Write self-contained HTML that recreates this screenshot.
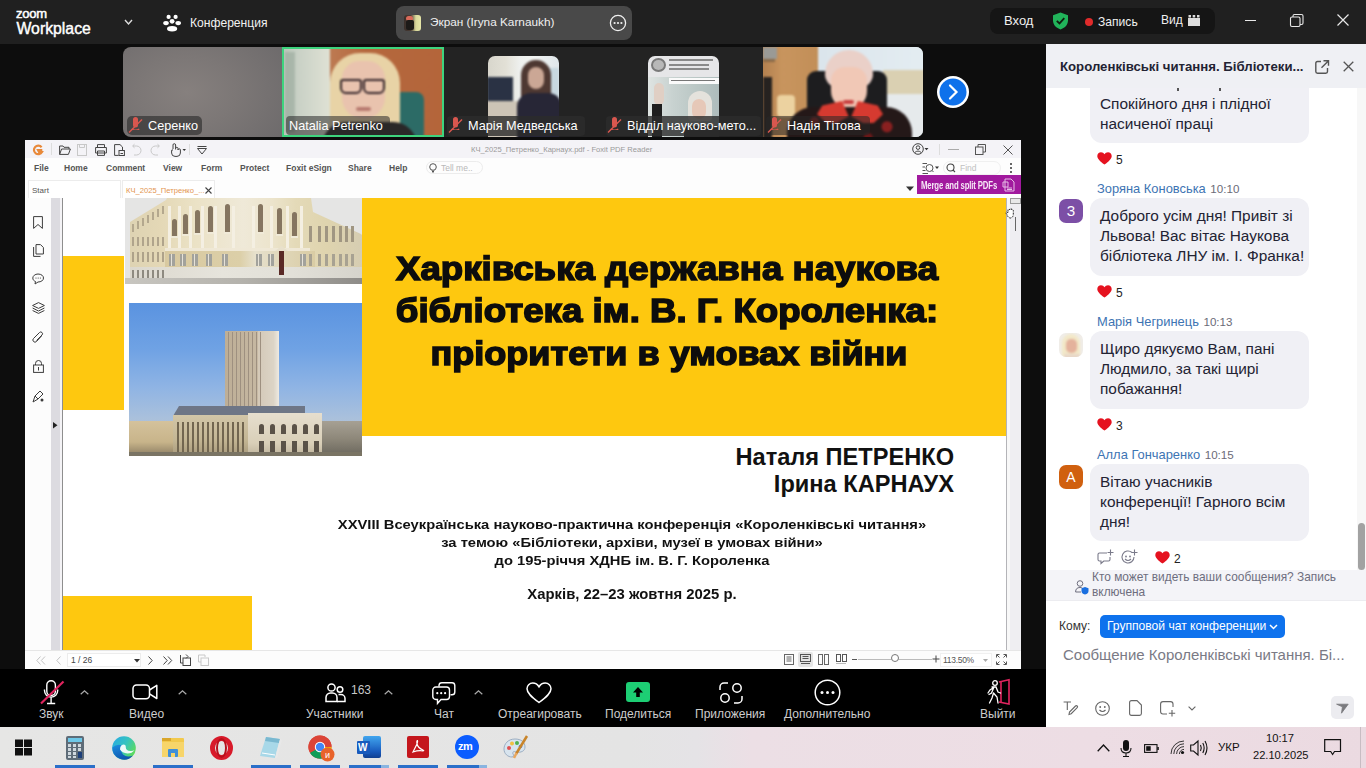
<!DOCTYPE html>
<html><head><meta charset="utf-8">
<style>
*{margin:0;padding:0;box-sizing:border-box}
html,body{width:1366px;height:768px;overflow:hidden;background:#0d0d0d;font-family:"Liberation Sans",sans-serif}
.a{position:absolute}
.t{position:absolute;white-space:nowrap;line-height:1}
svg{position:absolute;overflow:visible}
.ttl{font-size:33px;line-height:1;white-space:nowrap;text-align:center;font-weight:bold;color:#0d0d0d;-webkit-text-stroke:1.5px #0d0d0d;transform:scaleX(1.11);transform-origin:50% 0}
.nm{font-size:23.6px;font-weight:bold;color:#111}
.cf{font-size:13.6px;font-weight:bold;color:#111;text-align:center;line-height:18.1px;transform:scaleX(1.085);transform-origin:50% 0}
.cf2{font-size:14.3px;font-weight:bold;color:#111;text-align:center;transform:scaleX(1.04);transform-origin:50% 0}
.bub{background:#f0f0f5;border-radius:12px}
.msg{font-size:15.4px;color:#232333;padding-top:1px}
.rc{font-size:12px;color:#222;padding-top:1px}
.nmc{font-size:12.9px;color:#3d74b3}
.tm{color:#6b6b78;font-size:11.6px;margin-left:1px}
.av{width:24px;height:24px;border-radius:7px;color:#fff;font-size:14px;text-align:center;line-height:24px}
.nt{font-size:11.9px;color:#6e6e7e}
.tl{font-size:12px;color:#cdcdcd}
.lb{font-size:12.7px;color:#fff}
.mb{font-size:8.5px;font-weight:bold;color:#555}
</style></head><body>

<!-- TOP BAR -->
<div id="topbar" class="a" style="left:0;top:0;width:1366px;height:44px;background:#202020">
  <div class="t" style="left:16px;top:6.5px;font-size:13px;color:#fff;-webkit-text-stroke:0.5px #fff;letter-spacing:-0.2px">zoom</div>
  <div class="t" style="left:16.5px;top:20.5px;font-size:15.8px;color:#fff;-webkit-text-stroke:0.4px #fff">Workplace</div>
  <svg style="left:124px;top:19px" width="9" height="7"><path d="M1 1 L4.5 5 L8 1" stroke="#ddd" stroke-width="1.4" fill="none"/></svg>
  <svg style="left:163px;top:14px" width="18" height="18" viewBox="0 0 18 18">
    <circle cx="5.6" cy="2.9" r="2.1" fill="#fff"/><circle cx="12.6" cy="2.9" r="2.1" fill="#fff"/>
    <ellipse cx="3" cy="9.1" rx="2.8" ry="2.1" fill="#fff"/><ellipse cx="15.2" cy="9.1" rx="2.8" ry="2.1" fill="#fff"/>
    <circle cx="9.1" cy="7.3" r="3" fill="#202020"/><circle cx="9.1" cy="7.3" r="2.4" fill="#fff"/>
    <ellipse cx="9.1" cy="14.6" rx="5.6" ry="3.2" fill="#202020"/><ellipse cx="9.1" cy="14.7" rx="5.1" ry="2.7" fill="#fff"/>
  </svg>
  <div class="t" style="left:190px;top:16.5px;font-size:12.1px;color:#f2f2f2">Конференция</div>
  <div class="a" style="left:396px;top:6px;width:236px;height:34px;background:#494949;border-radius:8px">
    <div class="a" style="left:8px;top:9px;width:17px;height:16px;border-radius:3px;background:linear-gradient(90deg,#3a2f2a 0%,#4a3b33 40%,#d8d89a 70%,#e6e6a8 100%)">
      <div class="a" style="left:2px;top:1px;width:7px;height:5px;border-radius:3px;background:#d86a5a"></div>
      <div class="a" style="left:2px;top:5px;width:8px;height:10px;border-radius:2px;background:#1c1a18"></div>
    </div>
    <div class="t" style="left:34px;top:10.5px;font-size:11.8px;color:#f0f0f0">Экран (Iryna Karnaukh)</div>
    <svg style="left:213px;top:8px" width="18" height="18"><circle cx="9" cy="9" r="7.6" stroke="#f0f0f0" stroke-width="1.3" fill="none"/><circle cx="5.6" cy="9" r="1.1" fill="#f0f0f0"/><circle cx="9" cy="9" r="1.1" fill="#f0f0f0"/><circle cx="12.4" cy="9" r="1.1" fill="#f0f0f0"/></svg>
  </div>
  <div class="a" style="left:990px;top:8px;width:225px;height:26px;background:#151515;border-radius:8px">
    <div class="t" style="left:14px;top:6px;font-size:13px;color:#f0f0f0">Вход</div>
    <svg style="left:62px;top:4px" width="17" height="18" viewBox="0 0 17 18"><path d="M8.5 0.5 L16 3.2 V8.5 C16 13 12.5 16 8.5 17.5 C4.5 16 1 13 1 8.5 V3.2 Z" fill="#21b35a"/><path d="M4.8 8.8 L7.5 11.4 L12.3 6.2" stroke="#0f1f10" stroke-width="1.8" fill="none"/></svg>
    <div class="a" style="left:95px;top:10px;width:8px;height:8px;border-radius:50%;background:#e02b2b"></div>
    <div class="t" style="left:108px;top:7.5px;font-size:12.1px;color:#f0f0f0">Запись</div>
    <div class="t" style="left:171px;top:5.5px;font-size:12px;color:#f0f0f0">Вид</div>
    <svg style="left:198px;top:7px" width="12" height="11"><rect x="0" y="3" width="12" height="8" fill="#ddd"/><rect x="0.5" y="0" width="2.5" height="2.5" fill="#ddd"/><rect x="4.7" y="0" width="2.5" height="2.5" fill="#ddd"/><rect x="9" y="0" width="2.5" height="2.5" fill="#ddd"/></svg>
  </div>
  <div class="a" style="left:1245px;top:20px;width:11px;height:1px;background:#e8e8e8"></div>
  <svg style="left:1290px;top:14px" width="14" height="13"><rect x="0.5" y="3" width="9.5" height="9.5" rx="1.5" stroke="#e8e8e8" stroke-width="1.1" fill="none"/><path d="M3 3 V2 Q3 0.5 4.5 0.5 H11.5 Q13 0.5 13 2 V9 Q13 10.5 11.5 10.5 H10" stroke="#e8e8e8" stroke-width="1.1" fill="none"/></svg>
  <svg style="left:1337px;top:14px" width="12" height="12"><path d="M0.5 0.5 L11.5 11.5 M11.5 0.5 L0.5 11.5" stroke="#e8e8e8" stroke-width="1.2"/></svg>
</div>

<!-- VIDEO STRIP -->
<div id="strip" class="a" style="left:0;top:44px;width:1046px;height:96px;background:#0d0d0d">
</div>
<!-- tile 1 Серенко -->
<div class="a" style="left:123px;top:47px;width:160px;height:90px;border-radius:8px 0 0 8px;overflow:hidden;background:radial-gradient(ellipse 70% 90% at 40% 50%,#86807e 0%,#7c7776 45%,#6e6b6c 100%)">
  <div class="a" style="left:4px;top:69px;width:75px;height:19px;border-radius:5px;background:rgba(40,40,40,0.6)"></div>
  <svg style="left:5px;top:71px" width="15" height="15" viewBox="0 0 15 15"><path d="M5 1.5 A2.5 2.5 0 0 1 10 1.5 V7 A2.5 2.5 0 0 1 5 7 Z M4 10.5 Q7.5 12.5 11 10.5 L11.5 12 H3.5 Z" fill="#d9574f"/><path d="M1 14.5 L14 1.5" stroke="#d9574f" stroke-width="1.5"/></svg>
  <div class="t lb" style="left:25px;top:73px">Серенко</div>
</div>
<!-- tile 2 Natalia -->
<div class="a" style="left:282px;top:47px;width:162px;height:90px;overflow:hidden;background:#b5683e">
  <div class="a" style="left:-5px;top:-5px;width:172px;height:100px;filter:blur(1.3px)">
    <div class="a" style="left:0;top:0;width:53px;height:100px;background:linear-gradient(90deg,#b4c0b4 0%,#c9d1c6 40%,#dfe1d4 100%)"></div>
    <div class="a" style="left:8px;top:10px;width:10px;height:80px;background:#8fa294;opacity:0.5"></div>
    <div class="a" style="left:53px;top:0;width:119px;height:100px;background:linear-gradient(90deg,#bd7a52 0%,#b5683e 30%,#b4653a 100%)"></div>
    <div class="a" style="left:117px;top:50px;width:30px;height:50px;border-radius:8px;background:#2c6b66"></div>
    <div class="a" style="left:53px;top:11px;width:70px;height:95px;border-radius:30px 30px 8px 8px;background:#e8d3a6"></div>
    <div class="a" style="left:65px;top:19px;width:43px;height:58px;border-radius:18px 18px 22px 22px;background:#e9c3ae"></div>
    <div class="a" style="left:63px;top:37px;width:22px;height:15px;border:2px solid #35262a;border-radius:3px 3px 6px 6px"></div>
    <div class="a" style="left:86px;top:37px;width:22px;height:15px;border:2px solid #35262a;border-radius:3px 3px 6px 6px"></div>
    <div class="a" style="left:79px;top:65px;width:15px;height:4px;border-radius:2px;background:#b87a70"></div>
    <div class="a" style="left:45px;top:80px;width:95px;height:30px;border-radius:24px 24px 0 0;background:#2a2828"></div>
  </div>
  <div class="a" style="left:0;top:0;width:162px;height:90px;border:2.5px solid #3ed47e"></div>
  <div class="a" style="left:4px;top:69px;width:104px;height:19px;border-radius:4px;background:rgba(40,40,40,0.55)"></div>
  <div class="t lb" style="left:7px;top:73px">Natalia Petrenko</div>
</div>
<!-- tile 3 Марія -->
<div class="a" style="left:444px;top:47px;width:159px;height:90px;overflow:hidden;background:#232323">
  <div class="a" style="left:44px;top:9px;width:71px;height:81px;border-radius:7px 7px 0 0;overflow:hidden;background:linear-gradient(90deg,#d8d6cc 0%,#e2e0d6 25%,#eef0ee 45%,#f2f4f2 65%,#dfe6ea 100%)">
    <div class="a" style="left:-3px;top:-3px;width:77px;height:87px;filter:blur(1px)">
      <div class="a" style="left:60px;top:15px;width:14px;height:30px;background:#c8d8e0"></div>
      <div class="a" style="left:2px;top:24px;width:26px;height:24px;background:#2a3244"></div>
      <div class="a" style="left:0;top:48px;width:40px;height:40px;background:#cdc4b6"></div>
      <div class="a" style="left:36px;top:7px;width:30px;height:42px;border-radius:15px 15px 6px 6px;background:#4e3832"></div>
      <div class="a" style="left:43px;top:14px;width:16px;height:22px;border-radius:8px;background:#cba795"></div>
      <div class="a" style="left:32px;top:40px;width:45px;height:48px;border-radius:14px 14px 0 0;background:#272636"></div>
    </div>
  </div>
  <div class="a" style="left:3px;top:69px;width:138px;height:20px;border-radius:4px;background:rgba(44,44,44,0.8)"></div>
  <svg style="left:4px;top:71px" width="15" height="15" viewBox="0 0 15 15"><path d="M5 1.5 A2.5 2.5 0 0 1 10 1.5 V7 A2.5 2.5 0 0 1 5 7 Z M4 10.5 Q7.5 12.5 11 10.5 L11.5 12 H3.5 Z" fill="#d9574f"/><path d="M1 14.5 L14 1.5" stroke="#d9574f" stroke-width="1.5"/></svg>
  <div class="t lb" style="left:24px;top:73px">Марія Медведська</div>
</div>
<!-- tile 4 Відділ -->
<div class="a" style="left:603px;top:47px;width:160px;height:90px;overflow:hidden;background:#232323">
  <div class="a" style="left:45px;top:9px;width:71px;height:81px;border-radius:7px 7px 0 0;overflow:hidden;background:#e6e6e8">
    <div class="a" style="left:0;top:0;width:71px;height:81px;filter:blur(0.7px)">
      <div class="a" style="left:3px;top:2px;width:15px;height:14px;border-radius:50%;background:#7a7a7a"></div>
      <div class="a" style="left:5px;top:4px;width:11px;height:10px;border-radius:50%;background:#b8b8b8"></div>
      <div class="a" style="left:21px;top:3px;width:44px;height:2px;background:#8a8a8a"></div>
      <div class="a" style="left:21px;top:8px;width:40px;height:2px;background:#8a8a8a"></div>
      <div class="a" style="left:21px;top:12px;width:40px;height:2px;background:#8a8a8a"></div>
      <div class="a" style="left:0;top:21px;width:71px;height:60px;background:linear-gradient(90deg,#dfe4e2 0%,#c8d2d0 35%,#b9c6c4 70%,#aebcbc 100%)"></div>
      <div class="a" style="left:21px;top:22px;width:50px;height:6px;background:#fafafa"></div>
      <div class="a" style="left:23px;top:24px;width:44px;height:1px;background:#777"></div>
      <div class="a" style="left:40px;top:35px;width:24px;height:30px;border-radius:12px 12px 4px 4px;background:#e4e2dc"></div>
      <div class="a" style="left:44px;top:43px;width:14px;height:20px;border-radius:7px;background:#e6c8b8"></div>
      <div class="a" style="left:6px;top:27px;width:10px;height:22px;border-radius:5px;background:#e0cfc4"></div>
      <div class="a" style="left:4px;top:48px;width:10px;height:34px;background:#1e1e1e"></div>
      <div class="a" style="left:36px;top:70px;width:35px;height:12px;background:#2a2a2a"></div>
    </div>
  </div>
  <div class="a" style="left:3px;top:69px;width:155px;height:20px;border-radius:4px;background:rgba(44,44,44,0.8)"></div>
  <svg style="left:4px;top:71px" width="15" height="15" viewBox="0 0 15 15"><path d="M5 1.5 A2.5 2.5 0 0 1 10 1.5 V7 A2.5 2.5 0 0 1 5 7 Z M4 10.5 Q7.5 12.5 11 10.5 L11.5 12 H3.5 Z" fill="#d9574f"/><path d="M1 14.5 L14 1.5" stroke="#d9574f" stroke-width="1.5"/></svg>
  <div class="t lb" style="left:24px;top:73px">Відділ науково-мето...</div>
</div>
<!-- tile 5 Надія -->
<div class="a" style="left:763px;top:47px;width:160px;height:90px;border-radius:0 7px 7px 0;overflow:hidden;background:#dfe8ee">
  <div class="a" style="left:-4px;top:-4px;width:168px;height:98px;filter:blur(1px)">
    <div class="a" style="left:0;top:0;width:59px;height:98px;background:linear-gradient(90deg,#b07c4c,#c8955e 40%,#c28e58 100%)"></div>
    <div class="a" style="left:4px;top:4px;width:14px;height:12px;background:#9a9a96"></div>
    <div class="a" style="left:4px;top:16px;width:12px;height:3px;background:#8a6a48"></div>
    <div class="a" style="left:4px;top:34px;width:9px;height:64px;background:#262220"></div>
    <div class="a" style="left:18px;top:52px;width:18px;height:22px;border-radius:4px;background:#ecd2a0"></div>
    <div class="a" style="left:59px;top:0;width:109px;height:28px;background:linear-gradient(90deg,#dbe5ec,#e4edf2)"></div>
    <div class="a" style="left:59px;top:28px;width:109px;height:70px;background:#e6eaec"></div>
    <div class="a" style="left:124px;top:27px;width:44px;height:24px;background:#dad0b2"></div>
    <div class="a" style="left:48px;top:28px;width:80px;height:70px;border-radius:9px 9px 0 0;background:#1d1d1f"></div>
    <div class="a" style="left:66px;top:7px;width:48px;height:38px;border-radius:24px 24px 14px 14px;background:#ead0c8"></div>
    <div class="a" style="left:72px;top:24px;width:36px;height:42px;border-radius:14px 14px 18px 18px;background:#f1c8b6"></div>
    <div class="a" style="left:84px;top:57px;width:11px;height:4px;border-radius:2px;background:#c84040"></div>
    <div class="a" style="left:28px;top:64px;width:125px;height:36px;border-radius:26px 26px 0 0;background:radial-gradient(circle at 22% 40%,#7a1c1c 0 4px,transparent 5px),radial-gradient(circle at 80% 55%,#8a2020 0 5px,transparent 6px),radial-gradient(circle at 65% 85%,#6a1818 0 4px,transparent 5px),#241818"></div>
    <div class="a" style="left:58px;top:58px;width:66px;height:22px;background:#d63a30;clip-path:polygon(8% 20%,38% 0,48% 70%,30% 100%,14% 100%,0 60%)"></div><div class="a" style="left:58px;top:58px;width:66px;height:22px;background:#d63a30;clip-path:polygon(92% 20%,62% 0,52% 70%,70% 100%,86% 100%,100% 60%)"></div>
  </div>
  <div class="a" style="left:3px;top:69px;width:104px;height:19px;border-radius:4px;background:rgba(40,40,40,0.55)"></div>
  <svg style="left:4px;top:71px" width="15" height="15" viewBox="0 0 15 15"><path d="M5 1.5 A2.5 2.5 0 0 1 10 1.5 V7 A2.5 2.5 0 0 1 5 7 Z M4 10.5 Q7.5 12.5 11 10.5 L11.5 12 H3.5 Z" fill="#d9574f"/><path d="M1 14.5 L14 1.5" stroke="#d9574f" stroke-width="1.5"/></svg>
  <div class="t lb" style="left:24px;top:73px">Надія Тітова</div>
</div>
<svg style="left:936px;top:75px" width="34" height="34"><circle cx="17" cy="17" r="16" fill="#fff"/><circle cx="17" cy="17" r="13.5" fill="#0e71eb"/><path d="M14 10.5 L20.5 17 L14 23.5" stroke="#fff" stroke-width="2.2" fill="none" stroke-linecap="round"/></svg>

<!-- FOXIT WINDOW -->
<div id="foxit" class="a" style="left:25px;top:140px;width:996px;height:529px;background:#fff;overflow:hidden">
  <!-- title bar -->
  <div class="a" style="left:0;top:0;width:996px;height:18px;background:#f4f3f7">
    <svg style="left:8px;top:5px" width="10" height="11" viewBox="0 0 10 11"><path d="M8.6 2.2 A4.3 4.3 0 1 0 9 7 L6 7 L5 5 L9.3 5" stroke="#e8893a" stroke-width="2.2" fill="none"/></svg>
    <div class="a" style="left:26px;top:3px;width:1px;height:12px;background:#ddd"></div>
    <svg style="left:34px;top:5px" width="12" height="10"><path d="M0.6 1 H4 L5 2.3 H10 V4 M0.6 1 V9.4 H9.4 L11.4 4 H2.6 L0.6 9.4" stroke="#444" stroke-width="1" fill="none"/></svg>
    <svg style="left:52px;top:4px" width="10" height="12"><rect x="0.5" y="0.5" width="9" height="11" stroke="#c8c8c8" fill="none"/><path d="M2.5 0.5 V3.5 H7.5 V0.5" stroke="#c8c8c8" fill="none"/></svg>
    <svg style="left:70px;top:4px" width="12" height="12"><path d="M2.5 3.5 V0.6 H9.5 V3.5 M0.6 3.5 H11.4 V9 H0.6 Z M2.5 7 H9.5 V11.4 H2.5 Z" stroke="#444" stroke-width="1" fill="none"/></svg>
    <svg style="left:89px;top:4px" width="11" height="12"><path d="M0.6 0.6 H6 L8.5 3 V6 M0.6 0.6 V11.4 H4.5" stroke="#444" stroke-width="1" fill="none"/><rect x="5" y="6.5" width="5.4" height="5" stroke="#444" fill="none"/><path d="M6.5 9.5 H9" stroke="#444"/></svg>
    <svg style="left:107px;top:4px" width="10" height="12"><path d="M1 2 H4.5 A4.5 4.5 0 0 1 4.5 11 H2" stroke="#c8c8c8" stroke-width="1" fill="none"/><path d="M2.5 0.2 L0.6 2 L2.5 3.8" stroke="#c8c8c8" fill="none"/></svg>
    <svg style="left:125px;top:4px" width="10" height="12"><path d="M9 2 H5.5 A4.5 4.5 0 0 0 5.5 11 H8" stroke="#c8c8c8" stroke-width="1" fill="none"/><path d="M7.5 0.2 L9.4 2 L7.5 3.8" stroke="#c8c8c8" fill="none"/></svg>
    <svg style="left:144px;top:3px" width="18" height="14"><path d="M4 6 V2 A1.3 1.3 0 0 1 6.6 2 V6.5 M6.6 5.5 A1.2 1.2 0 0 1 9 5.5 V7 A1.2 1.2 0 0 1 11.4 7 V10 A3.5 3.5 0 0 1 8 13.4 H6 A3.5 3.5 0 0 1 2.6 10 V8 A1 1 0 0 1 4 7" stroke="#444" stroke-width="1" fill="none"/><path d="M13.5 6 H17 L15.25 8 Z" fill="#333"/></svg>
    <div class="a" style="left:164px;top:4px;width:1px;height:11px;background:#ddd"></div>
    <svg style="left:172px;top:6px" width="10" height="9"><path d="M0.5 0.5 H9.5 M0.5 2.5 L5 8 L9.5 2.5 Z" stroke="#444" stroke-width="1" fill="none"/></svg>
    <div class="t" style="left:446px;top:5.5px;font-size:7.6px;color:#9a9a9a">КЧ_2025_Петренко_Карнаух.pdf - Foxit PDF Reader</div>
    <svg style="left:887px;top:3px" width="20" height="12"><circle cx="6" cy="6" r="5.3" stroke="#444" fill="none"/><circle cx="6" cy="4.6" r="1.8" stroke="#444" fill="none"/><path d="M2.7 9.6 Q6 6.5 9.3 9.6" stroke="#444" fill="none"/><path d="M12.5 5 H16.5 L14.5 7.3 Z" fill="#333"/></svg>
    <div class="a" style="left:914px;top:4px;width:1px;height:11px;background:#ddd"></div>
    <div class="a" style="left:923px;top:9px;width:11px;height:1px;background:#aaa"></div>
    <svg style="left:950px;top:4px" width="11" height="11"><rect x="0.5" y="3" width="7.5" height="7.5" stroke="#555" fill="none"/><path d="M3 3 V0.5 H10.5 V8 H8" stroke="#555" fill="none"/></svg>
    <svg style="left:978px;top:5px" width="10" height="10"><path d="M0.5 0.5 L9.5 9.5 M9.5 0.5 L0.5 9.5" stroke="#555" stroke-width="1"/></svg>
  </div>
  <!-- menu bar -->
  <div class="a" style="left:0;top:18px;width:996px;height:22px;background:#fdfdfd">
    <div class="t mb" style="left:9px;top:6px">File</div>
    <div class="t mb" style="left:39px;top:6px">Home</div>
    <div class="t mb" style="left:81px;top:6px">Comment</div>
    <div class="t mb" style="left:138px;top:6px">View</div>
    <div class="t mb" style="left:176px;top:6px">Form</div>
    <div class="t mb" style="left:215px;top:6px">Protect</div>
    <div class="t mb" style="left:261px;top:6px">Foxit eSign</div>
    <div class="t mb" style="left:323px;top:6px">Share</div>
    <div class="t mb" style="left:364px;top:6px">Help</div>
    <div class="a" style="left:401px;top:3px;width:57px;height:13px;border:1px solid #ececec;border-radius:7px"></div>
    <svg style="left:404px;top:5px" width="8" height="10"><circle cx="4" cy="4" r="3.3" stroke="#555" fill="none"/><path d="M3 7.5 L4 9.5 L5 7.5" stroke="#555" fill="none"/></svg>
    <div class="t" style="left:416px;top:6px;font-size:8.5px;color:#b8b8b8">Tell me..</div>
    <svg style="left:897px;top:4px" width="20" height="12"><path d="M0.5 1.5 H5 M0.5 5 H3 M0.5 8.5 H3.5 M0.5 11.5 H6" stroke="#555" fill="none"/><circle cx="7.5" cy="6" r="3.5" stroke="#555" fill="none"/><path d="M10 8.5 L11.5 10" stroke="#555"/><path d="M13 4.5 H17 L15 7 Z" fill="#333"/></svg>
    <div class="a" style="left:918px;top:3px;width:58px;height:14px;border:1px solid #f0f0f0;border-radius:7px"></div>
    <svg style="left:921px;top:5px" width="10" height="10"><circle cx="4.5" cy="4.5" r="3.5" stroke="#444" stroke-width="1.1" fill="none"/><path d="M7 7 L9 9" stroke="#444" stroke-width="1.1"/></svg>
    <div class="t" style="left:935px;top:6px;font-size:8.5px;color:#c0c0c0">Find</div>
    <div class="a" style="left:985px;top:5px;width:2px;height:2px;background:#666"></div>
    <div class="a" style="left:985px;top:9px;width:2px;height:2px;background:#666"></div>
    <div class="a" style="left:985px;top:13px;width:2px;height:2px;background:#666"></div>
  </div>
  <!-- tab bar -->
  <div class="a" style="left:0;top:40px;width:996px;height:18px;background:#fdfdfd">
    <div class="a" style="left:3px;top:0;width:93px;height:18px;border:1px solid #ececec;border-bottom:none;background:#fff"></div>
    <div class="t" style="left:7px;top:7px;font-size:8px;color:#555">Start</div>
    <div class="a" style="left:97px;top:0;width:93px;height:18px;border:1px solid #ececec;border-bottom:none;background:#fff"></div>
    <div class="t" style="left:101px;top:6.5px;font-size:7.6px;color:#e39550">КЧ_2025_Петренко_...</div>
    <svg style="left:180px;top:7px" width="7" height="7"><path d="M0.5 0.5 L6.5 6.5 M6.5 0.5 L0.5 6.5" stroke="#444" stroke-width="1.1"/></svg>
    <svg style="left:881px;top:6px" width="8" height="6"><path d="M0 0.5 H8 L4 5 Z" fill="#333"/></svg>
    <div class="a" style="left:892px;top:-5px;width:104px;height:19px;background:#a1199e"></div>
    <div class="t" style="left:896px;top:0px;font-size:10.5px;font-weight:bold;color:#f6e8f6;transform:scaleX(0.74);transform-origin:0 0;letter-spacing:-0.2px">Merge and split PDFs</div>
    <svg style="left:977px;top:-2px" width="14" height="14"><path d="M3 1 H9 L12 4 V13 H3 Z M1 4 H6 V9 H1 Z" stroke="#e6bde6" stroke-width="1" fill="none"/><path d="M5 10 H10 M5 11.5 H10" stroke="#e6bde6"/></svg>
  </div>
  <!-- content area -->
  <div class="a" style="left:0;top:58px;width:26px;height:452px;background:#fcfcfc">
    <svg style="left:8px;top:18px" width="10" height="13"><path d="M0.6 0.6 H9.4 V12.4 L5 8.5 L0.6 12.4 Z" stroke="#3c3c3c" stroke-width="1" fill="none"/></svg>
    <svg style="left:8px;top:46px" width="11" height="13"><path d="M3 0.6 H7.5 L10.4 3.5 V10 H3 Z M0.6 3 V12.4 H7.5" stroke="#3c3c3c" stroke-width="1" fill="none"/></svg>
    <svg style="left:7px;top:75px" width="13" height="12"><path d="M6 1 C9.5 1 11.5 3 11.5 5 C11.5 7.5 9 9 6 9 L3 11 L3.5 8.5 C2 8 0.8 6.8 0.8 5 C0.8 3 3 1 6 1 Z" stroke="#3c3c3c" stroke-width="1" fill="none"/><circle cx="4" cy="5" r="0.6" fill="#3c3c3c"/><circle cx="6.2" cy="5" r="0.6" fill="#3c3c3c"/><circle cx="8.4" cy="5" r="0.6" fill="#3c3c3c"/></svg>
    <svg style="left:7px;top:104px" width="13" height="12"><path d="M6.5 0.6 L12.4 3.5 L6.5 6.4 L0.6 3.5 Z M0.6 6 L6.5 9 L12.4 6 M0.6 8.5 L6.5 11.4 L12.4 8.5" stroke="#3c3c3c" stroke-width="1" fill="none"/></svg>
    <svg style="left:7px;top:133px" width="12" height="13"><path d="M9.5 5 L4.5 10.5 A2 2 0 0 1 1.5 7.5 L7.5 1.5 A1.5 1.5 0 0 1 10 4 L4.5 9.5" stroke="#3c3c3c" stroke-width="1" fill="none"/></svg>
    <svg style="left:8px;top:162px" width="11" height="13"><rect x="0.6" y="5" width="9.8" height="7.4" stroke="#3c3c3c" fill="none"/><path d="M2.5 5 V3.5 A3 3 0 0 1 8.5 3.5 V5" stroke="#3c3c3c" fill="none"/><path d="M5.5 7 V10.5" stroke="#3c3c3c"/></svg>
    <svg style="left:7px;top:192px" width="13" height="13"><path d="M1 12 L3 6 L8 1 L11 4 L6 9 Z M3 6 L6 9" stroke="#3c3c3c" stroke-width="1" fill="none"/><circle cx="10" cy="10" r="1.5" fill="#3c3c3c"/></svg>
  </div>
  <div class="a" style="left:26px;top:58px;width:9px;height:452px;background:#dcdbe0"></div><div class="a" style="left:35px;top:58px;width:2px;height:452px;background:#f4f3f6"></div>
  <svg style="left:27.5px;top:281.5px" width="5" height="7"><path d="M0 0 L4.5 3.2 L0 6.5 Z" fill="#222"/></svg>
  <div class="a" style="left:37px;top:58px;width:1px;height:452px;background:#8e8e8e"></div>
  <div class="a" style="left:38px;top:58px;width:943px;height:452px;background:#fff;overflow:hidden">
    <div class="a" style="left:0;top:58px;width:61px;height:154px;background:#fec80f"></div>
    <div class="a" style="left:299px;top:0;width:644px;height:238px;background:#fec80f"></div>
    <div class="a" style="left:0;top:398px;width:189px;height:54px;background:#fec80f"></div>
    <!-- image 1 -->
    <div class="a" style="left:62px;top:0;width:237px;height:86px;overflow:hidden;background:#e5e5e4">
      <div class="a" style="left:0;top:0;width:237px;height:86px;filter:blur(0.7px)">
      <div class="a" style="left:0;top:0;width:237px;height:86px;background:linear-gradient(90deg,#ddd2b2 0%,#e4d8b6 15%,#ebe2c6 30%,#efe9d8 50%,#ece4cc 62%,#e4dab8 72%,#dfd4ae 85%,#d6cdb2 100%);clip-path:polygon(5px 24px,41px 2px,42px 0,186px 0,188px 14px,236px 36px,237px 37px,237px 86px,5px 86px)"></div>
      <div class="a" style="left:40px;top:53px;width:150px;height:16px;background:linear-gradient(90deg,#d8c9a0,#dccfa8 50%,#e6e0cc 60%,#d9cca4);"></div>
      <div class="a" style="left:5px;top:69px;width:232px;height:11px;background:linear-gradient(90deg,#dcd8ce,#e6e4dc 40%,#e2e0d8 70%,#d6d4cc);"></div>
      <div class="a" style="left:7px;top:26px;width:2px;height:8px;background:#b4a88e;"></div><div class="a" style="left:7px;top:39px;width:2px;height:9px;background:#b0a48c;"></div><div class="a" style="left:7px;top:54px;width:2px;height:10px;background:#aea28a;"></div><div class="a" style="left:7px;top:72px;width:2px;height:8px;background:#8e8a80;"></div><div class="a" style="left:12px;top:23px;width:2px;height:8px;background:#b4a88e;"></div><div class="a" style="left:12px;top:39px;width:2px;height:9px;background:#b0a48c;"></div><div class="a" style="left:12px;top:54px;width:2px;height:10px;background:#aea28a;"></div><div class="a" style="left:12px;top:72px;width:2px;height:8px;background:#8e8a80;"></div><div class="a" style="left:17px;top:20px;width:2px;height:8px;background:#b4a88e;"></div><div class="a" style="left:17px;top:39px;width:2px;height:9px;background:#b0a48c;"></div><div class="a" style="left:17px;top:54px;width:2px;height:10px;background:#aea28a;"></div><div class="a" style="left:17px;top:72px;width:2px;height:8px;background:#8e8a80;"></div><div class="a" style="left:22px;top:17px;width:2px;height:8px;background:#b4a88e;"></div><div class="a" style="left:22px;top:39px;width:2px;height:9px;background:#b0a48c;"></div><div class="a" style="left:22px;top:54px;width:2px;height:10px;background:#aea28a;"></div><div class="a" style="left:22px;top:72px;width:2px;height:8px;background:#8e8a80;"></div><div class="a" style="left:27px;top:14px;width:2px;height:8px;background:#b4a88e;"></div><div class="a" style="left:27px;top:39px;width:2px;height:9px;background:#b0a48c;"></div><div class="a" style="left:27px;top:54px;width:2px;height:10px;background:#aea28a;"></div><div class="a" style="left:27px;top:72px;width:2px;height:8px;background:#8e8a80;"></div><div class="a" style="left:32px;top:11px;width:2px;height:8px;background:#b4a88e;"></div><div class="a" style="left:32px;top:39px;width:2px;height:9px;background:#b0a48c;"></div><div class="a" style="left:32px;top:54px;width:2px;height:10px;background:#aea28a;"></div><div class="a" style="left:32px;top:72px;width:2px;height:8px;background:#8e8a80;"></div><div class="a" style="left:37px;top:8px;width:2px;height:8px;background:#b4a88e;"></div><div class="a" style="left:37px;top:39px;width:2px;height:9px;background:#b0a48c;"></div><div class="a" style="left:37px;top:54px;width:2px;height:10px;background:#aea28a;"></div><div class="a" style="left:37px;top:72px;width:2px;height:8px;background:#8e8a80;"></div><div class="a" style="left:43px;top:8px;width:3px;height:44px;background:#f4efe2;"></div><div class="a" style="left:53px;top:8px;width:3px;height:44px;background:#f4efe2;"></div><div class="a" style="left:64px;top:8px;width:3px;height:44px;background:#f4efe2;"></div><div class="a" style="left:76px;top:8px;width:3px;height:44px;background:#f4efe2;"></div><div class="a" style="left:89px;top:8px;width:3px;height:44px;background:#f4efe2;"></div><div class="a" style="left:107px;top:8px;width:3px;height:44px;background:#f4efe2;"></div><div class="a" style="left:127px;top:8px;width:3px;height:44px;background:#f4efe2;"></div><div class="a" style="left:145px;top:8px;width:3px;height:44px;background:#f4efe2;"></div><div class="a" style="left:161px;top:8px;width:3px;height:44px;background:#f4efe2;"></div><div class="a" style="left:175px;top:8px;width:3px;height:44px;background:#f4efe2;"></div><div class="a" style="left:47px;top:21px;width:5px;height:17px;background:#857560;border-radius:3px 3px 0 0"></div><div class="a" style="left:46px;top:38px;width:7px;height:2px;background:#f0ead8;"></div><div class="a" style="left:58px;top:16px;width:5px;height:20px;background:#857560;border-radius:3px 3px 0 0"></div><div class="a" style="left:57px;top:36px;width:7px;height:2px;background:#f0ead8;"></div><div class="a" style="left:70px;top:12px;width:5px;height:23px;background:#857560;border-radius:3px 3px 0 0"></div><div class="a" style="left:69px;top:35px;width:7px;height:2px;background:#f0ead8;"></div><div class="a" style="left:83px;top:8px;width:5px;height:26px;background:#857560;border-radius:3px 3px 0 0"></div><div class="a" style="left:82px;top:34px;width:7px;height:2px;background:#f0ead8;"></div><div class="a" style="left:100px;top:6px;width:5px;height:28px;background:#857560;border-radius:3px 3px 0 0"></div><div class="a" style="left:99px;top:34px;width:7px;height:2px;background:#f0ead8;"></div><div class="a" style="left:133px;top:6px;width:5px;height:28px;background:#857560;border-radius:3px 3px 0 0"></div><div class="a" style="left:132px;top:34px;width:7px;height:2px;background:#f0ead8;"></div><div class="a" style="left:152px;top:10px;width:5px;height:26px;background:#857560;border-radius:3px 3px 0 0"></div><div class="a" style="left:151px;top:36px;width:7px;height:2px;background:#f0ead8;"></div><div class="a" style="left:167px;top:14px;width:5px;height:24px;background:#857560;border-radius:3px 3px 0 0"></div><div class="a" style="left:166px;top:38px;width:7px;height:2px;background:#f0ead8;"></div><div class="a" style="left:40px;top:50px;width:145px;height:3px;background:#efe8d6;"></div><div class="a" style="left:44px;top:56px;width:6px;height:12px;background:#a2a29c;"></div><div class="a" style="left:46px;top:56px;width:1px;height:12px;background:#e6e2d8;"></div><div class="a" style="left:55px;top:56px;width:6px;height:12px;background:#a2a29c;"></div><div class="a" style="left:57px;top:56px;width:1px;height:12px;background:#e6e2d8;"></div><div class="a" style="left:67px;top:56px;width:6px;height:12px;background:#a2a29c;"></div><div class="a" style="left:69px;top:56px;width:1px;height:12px;background:#e6e2d8;"></div><div class="a" style="left:81px;top:56px;width:6px;height:12px;background:#a2a29c;"></div><div class="a" style="left:83px;top:56px;width:1px;height:12px;background:#e6e2d8;"></div><div class="a" style="left:97px;top:56px;width:6px;height:12px;background:#a2a29c;"></div><div class="a" style="left:99px;top:56px;width:1px;height:12px;background:#e6e2d8;"></div><div class="a" style="left:131px;top:56px;width:6px;height:12px;background:#a2a29c;"></div><div class="a" style="left:133px;top:56px;width:1px;height:12px;background:#e6e2d8;"></div><div class="a" style="left:143px;top:56px;width:6px;height:12px;background:#a2a29c;"></div><div class="a" style="left:145px;top:56px;width:1px;height:12px;background:#e6e2d8;"></div><div class="a" style="left:175px;top:56px;width:6px;height:12px;background:#a2a29c;"></div><div class="a" style="left:177px;top:56px;width:1px;height:12px;background:#e6e2d8;"></div><div class="a" style="left:184px;top:28px;width:3px;height:16px;background:#a09682;"></div><div class="a" style="left:184px;top:56px;width:3px;height:12px;background:#a8a292;"></div><div class="a" style="left:193px;top:28px;width:3px;height:16px;background:#a09682;"></div><div class="a" style="left:193px;top:56px;width:3px;height:12px;background:#a8a292;"></div><div class="a" style="left:200px;top:28px;width:3px;height:16px;background:#a09682;"></div><div class="a" style="left:200px;top:56px;width:3px;height:12px;background:#a8a292;"></div><div class="a" style="left:207px;top:28px;width:3px;height:16px;background:#a09682;"></div><div class="a" style="left:207px;top:56px;width:3px;height:12px;background:#a8a292;"></div><div class="a" style="left:214px;top:28px;width:3px;height:16px;background:#a09682;"></div><div class="a" style="left:214px;top:56px;width:3px;height:12px;background:#a8a292;"></div><div class="a" style="left:220px;top:28px;width:3px;height:16px;background:#a09682;"></div><div class="a" style="left:220px;top:56px;width:3px;height:12px;background:#a8a292;"></div><div class="a" style="left:226px;top:28px;width:3px;height:16px;background:#a09682;"></div><div class="a" style="left:226px;top:56px;width:3px;height:12px;background:#a8a292;"></div>
      <div class="a" style="left:154px;top:53px;width:5px;height:24px;background:#5a2a26;"></div>
      <div class="a" style="left:150px;top:48px;width:13px;height:5px;background:#e8e0cc;clip-path:polygon(50% 0,100% 100%,0 100%)"></div>
      <div class="a" style="left:0px;top:80px;width:237px;height:6px;background:linear-gradient(90deg,#c8c6c0,#b4b2ac 50%,#8e8c88);"></div>
      </div>
    </div>
    <!-- image 2 -->
    <div class="a" style="left:66px;top:105px;width:233px;height:153px;overflow:hidden;background:linear-gradient(180deg,#5a93e0 0%,#6fa2e4 30%,#8fb4e4 55%,#a9c0dc 75%,#bcc6d2 90%,#c0c4c8 100%)">
      <div class="a" style="left:0;top:0;width:233px;height:153px;filter:blur(0.5px)">
      <div class="a" style="left:96px;top:28px;width:54px;height:76px;background:linear-gradient(90deg,#bdae96 0%,#c6b8a2 60%,#d4c9b8 62%,#dcd4c6 90%,#eeeae2 100%)"></div>
      <div class="a" style="left:99px;top:29px;width:1px;height:75px;background:#9e9080;"></div><div class="a" style="left:103px;top:29px;width:1px;height:75px;background:#9e9080;"></div><div class="a" style="left:107px;top:29px;width:1px;height:75px;background:#9e9080;"></div><div class="a" style="left:111px;top:29px;width:1px;height:75px;background:#9e9080;"></div><div class="a" style="left:115px;top:29px;width:1px;height:75px;background:#9e9080;"></div><div class="a" style="left:119px;top:29px;width:1px;height:75px;background:#9e9080;"></div><div class="a" style="left:123px;top:29px;width:1px;height:75px;background:#9e9080;"></div><div class="a" style="left:127px;top:29px;width:1px;height:75px;background:#9e9080;"></div><div class="a" style="left:131px;top:29px;width:1px;height:75px;background:#9e9080;"></div>
      <div class="a" style="left:0px;top:118px;width:44px;height:35px;background:linear-gradient(180deg,#d4c29c,#c8b48a 60%,#8a7c62);"></div>
      <div class="a" style="left:44px;top:103px;width:132px;height:10px;background:#6e7686;clip-path:polygon(6px 0,100% 0,100% 100%,0 100%)"></div>
      <div class="a" style="left:44px;top:112px;width:75px;height:41px;background:linear-gradient(180deg,#d2c6a8,#c4b694 60%,#a89a7c);"></div>
      <div class="a" style="left:119px;top:110px;width:74px;height:43px;background:linear-gradient(180deg,#e6dece,#d9cfb8 70%,#bfb49c);"></div>
      <div class="a" style="left:48px;top:119px;width:2px;height:32px;background:#726650;"></div><div class="a" style="left:53px;top:119px;width:2px;height:32px;background:#726650;"></div><div class="a" style="left:58px;top:119px;width:2px;height:32px;background:#726650;"></div><div class="a" style="left:63px;top:119px;width:2px;height:32px;background:#726650;"></div><div class="a" style="left:68px;top:119px;width:2px;height:32px;background:#726650;"></div><div class="a" style="left:73px;top:119px;width:2px;height:32px;background:#726650;"></div><div class="a" style="left:78px;top:119px;width:2px;height:32px;background:#726650;"></div><div class="a" style="left:83px;top:119px;width:2px;height:32px;background:#726650;"></div><div class="a" style="left:88px;top:119px;width:2px;height:32px;background:#726650;"></div><div class="a" style="left:93px;top:119px;width:2px;height:32px;background:#726650;"></div><div class="a" style="left:98px;top:119px;width:2px;height:32px;background:#726650;"></div><div class="a" style="left:103px;top:119px;width:2px;height:32px;background:#726650;"></div><div class="a" style="left:108px;top:119px;width:2px;height:32px;background:#726650;"></div><div class="a" style="left:113px;top:119px;width:2px;height:32px;background:#726650;"></div>
      <div class="a" style="left:130px;top:121px;width:5px;height:10px;background:#5a5248;border-radius:3px 3px 0 0"></div><div class="a" style="left:141px;top:121px;width:5px;height:10px;background:#5a5248;border-radius:3px 3px 0 0"></div><div class="a" style="left:152px;top:121px;width:5px;height:10px;background:#5a5248;border-radius:3px 3px 0 0"></div><div class="a" style="left:163px;top:121px;width:5px;height:10px;background:#5a5248;border-radius:3px 3px 0 0"></div><div class="a" style="left:174px;top:121px;width:5px;height:10px;background:#5a5248;border-radius:3px 3px 0 0"></div><div class="a" style="left:185px;top:121px;width:5px;height:10px;background:#5a5248;border-radius:3px 3px 0 0"></div>
      <div class="a" style="left:130px;top:138px;width:5px;height:11px;background:#5a5248;"></div><div class="a" style="left:141px;top:138px;width:5px;height:11px;background:#5a5248;"></div><div class="a" style="left:152px;top:138px;width:5px;height:11px;background:#5a5248;"></div><div class="a" style="left:163px;top:138px;width:5px;height:11px;background:#5a5248;"></div><div class="a" style="left:174px;top:138px;width:5px;height:11px;background:#5a5248;"></div><div class="a" style="left:185px;top:138px;width:5px;height:11px;background:#5a5248;"></div>
      <div class="a" style="left:193px;top:118px;width:40px;height:35px;background:linear-gradient(180deg,#a6a094,#8e887a 50%,#6a665c);"></div>
      <div class="a" style="left:0px;top:149px;width:233px;height:4px;background:#7a7464;"></div>
      </div>
    </div>
    <!-- title -->
    <div class="a ttl" style="left:304px;top:54px;width:600px">Харківська державна наукова</div>
    <div class="a ttl" style="left:304px;top:96px;width:600px">бібліотека ім. В. Г. Короленка:</div>
    <div class="a ttl" style="left:306px;top:139px;width:600px;transform:scaleX(1.092)">пріоритети в умовах війни</div>
    <!-- names -->
    <div class="t nm" style="right:52px;top:248px">Наталя ПЕТРЕНКО</div>
    <div class="t nm" style="right:52px;top:275px">Ірина КАРНАУХ</div>
    <!-- conference -->
    <div class="a cf" style="left:269px;top:318px;width:600px">XXVIII Всеукраїнська науково-практична конференція «Короленківські читання»<br>за темою «Бібліотеки, архіви, музеї в умовах війни»<br>до 195-річчя ХДНБ ім. В. Г. Короленка</div>
    <div class="a cf2" style="left:269px;top:388px;width:600px">Харків, 22–23 жовтня 2025 р.</div>
  </div>
  <div class="a" style="left:981px;top:58px;width:15px;height:452px;background:linear-gradient(90deg,#b4b4b8 0,#b4b4b8 1px,#f8f8f8 1px,#f8f8f8 4px,#efeef2 4px)"></div>
  <div class="a" style="left:985px;top:58px;width:11px;height:6px;border:1.5px solid #9a9a9a;background:#e8e8e8"></div>
  <div class="a" style="left:990px;top:77px;width:1px;height:14px;background:#666"></div>
  <svg style="left:980px;top:68px" width="11" height="11" viewBox="0 0 11 11"><path d="M2 6.5 Q0.5 5 1.2 4.2 Q2 3.8 3 5 V2.2 Q3 1.2 3.9 1.2 Q4.7 1.2 4.8 2 V1.2 Q5 0.5 5.8 0.5 Q6.6 0.6 6.6 1.4 V2 Q6.8 1.5 7.5 1.6 Q8.3 1.8 8.3 2.6 V6 Q8.3 9.5 5.5 10 Q3 10 2 6.5 Z" fill="#fff" stroke="#111" stroke-width="0.9" stroke-dasharray="2 1"/></svg>
  <!-- status bar -->
  <div class="a" style="left:0;top:510px;width:996px;height:18px;background:#fcfcfc;border-top:1px solid #e6e6e6">
    <svg style="left:11px;top:5px" width="10" height="9"><path d="M4.5 0.5 L0.8 4.5 L4.5 8.5 M9 0.5 L5.3 4.5 L9 8.5" stroke="#c4c4c4" stroke-width="1" fill="none"/></svg>
    <svg style="left:31px;top:5px" width="5" height="9"><path d="M4.5 0.5 L0.8 4.5 L4.5 8.5" stroke="#c4c4c4" stroke-width="1" fill="none"/></svg>
    <div class="a" style="left:42px;top:2px;width:74px;height:14px;border:1px solid #ececec;background:#fff"></div>
    <div class="t" style="left:46px;top:5px;font-size:8.5px;color:#444">1 / 26</div>
    <svg style="left:109px;top:8px" width="6" height="4"><path d="M0 0 H6 L3 3.5 Z" fill="#333"/></svg>
    <svg style="left:123px;top:5px" width="5" height="9"><path d="M0.5 0.5 L4.2 4.5 L0.5 8.5" stroke="#444" stroke-width="1" fill="none"/></svg>
    <svg style="left:138px;top:5px" width="10" height="9"><path d="M0.5 0.5 L4.2 4.5 L0.5 8.5 M5 0.5 L8.7 4.5 L5 8.5" stroke="#444" stroke-width="1" fill="none"/></svg>
    <svg style="left:155px;top:3px" width="12" height="12"><path d="M0.5 1 V9 H3" stroke="#444" fill="none"/><rect x="3" y="4" width="7.5" height="7.5" stroke="#444" fill="none"/><path d="M6 0.5 L8 2.5 L6 4.5" stroke="#444" fill="none"/></svg>
    <svg style="left:173px;top:3px" width="12" height="12"><path d="M0.5 1 H7 V3 M0.5 1 V8 H3" stroke="#c8c8c8" fill="none"/><rect x="3" y="4" width="7.5" height="7.5" stroke="#c8c8c8" fill="none"/></svg>
    <svg style="left:759px;top:3px" width="10" height="11"><rect x="0.5" y="0.5" width="9" height="10" stroke="#666" fill="none"/><path d="M2.5 3 H7.5 M2.5 5 H7.5 M2.5 7 H7.5" stroke="#666"/></svg>
    <div class="a" style="left:773px;top:1px;width:15px;height:15px;background:#e4e4e4;border-radius:2px"></div>
    <svg style="left:775px;top:3px" width="11" height="11"><rect x="0.5" y="0.5" width="10" height="7" stroke="#555" fill="none"/><path d="M2.5 2.5 H8.5 M2.5 4.5 H8.5 M1 9.5 H10" stroke="#555"/></svg>
    <svg style="left:793px;top:3px" width="11" height="11"><rect x="0.5" y="0.5" width="4" height="10" stroke="#666" fill="none"/><rect x="6.5" y="0.5" width="4" height="10" stroke="#666" fill="none"/></svg>
    <svg style="left:811px;top:3px" width="11" height="11"><rect x="0.5" y="0.5" width="4" height="7" stroke="#555" fill="none"/><rect x="6.5" y="0.5" width="4" height="7" stroke="#555" fill="none"/><path d="M0.5 9.5 H10.5" stroke="#777" stroke-dasharray="1 1"/></svg>
    <div class="a" style="left:827px;top:8px;width:5px;height:1px;background:#555"></div>
    <div class="a" style="left:833px;top:8px;width:74px;height:1px;background:#bbb"></div>
    <div class="a" style="left:866px;top:3px;width:8px;height:8px;border-radius:50%;border:1px solid #777;background:#fff"></div>
    <svg style="left:907px;top:4px" width="8" height="8"><path d="M4 0.5 V7.5 M0.5 4 H7.5" stroke="#444" stroke-width="1"/></svg>
    <div class="a" style="left:915px;top:2px;width:52px;height:14px;border:1px solid #f0f0f0;background:#fff"></div>
    <div class="t" style="left:918px;top:5px;font-size:8.5px;color:#555;letter-spacing:-0.3px">113.50%</div>
    <svg style="left:958px;top:8px" width="5" height="3"><path d="M0 0 H5 L2.5 3 Z" fill="#aaa"/></svg>
    <svg style="left:971px;top:3px" width="11" height="11"><path d="M0.5 3.5 V0.5 H3.5 M7.5 0.5 H10.5 V3.5 M10.5 7.5 V10.5 H7.5 M3.5 10.5 H0.5 V7.5 M1 1 L3.5 3.5 M10 1 L7.5 3.5 M10 10 L7.5 7.5 M1 10 L3.5 7.5" stroke="#555" fill="none"/></svg>
  </div>
</div>

<!-- ZOOM TOOLBAR -->
<div id="toolbar" class="a" style="left:0;top:669px;width:1046px;height:58px;background:#000">
  <svg style="left:40px;top:11px" width="25" height="25" viewBox="0 0 25 25"><rect x="6.8" y="0.7" width="8.6" height="14.8" rx="4.3" stroke="#fff" stroke-width="1.4" fill="none"/><path d="M4.5 9.5 V10.5 A6.6 6.6 0 0 0 17.7 10.5 V9.5 M11.1 17.2 V23.5 M7 23.5 H15.2" stroke="#fff" stroke-width="1.4" fill="none"/><path d="M1 23.5 L23.5 1.5" stroke="#e0245e" stroke-width="2.2"/></svg>
  <svg style="left:80px;top:21px" width="9" height="5"><path d="M0.7 4.3 L4.5 0.8 L8.3 4.3" stroke="#aaa" stroke-width="1.2" fill="none"/></svg>
  <div class="t tl" style="left:39px;top:39px">Звук</div>
  <svg style="left:132px;top:15px" width="27" height="16" viewBox="0 0 27 16"><rect x="1" y="1" width="16.5" height="13.7" rx="3.5" stroke="#fff" stroke-width="1.5" fill="none"/><path d="M17.5 6 L24.8 1.3 V14.5 L17.5 9.8" stroke="#fff" stroke-width="1.5" fill="none" stroke-linejoin="round"/></svg>
  <svg style="left:178px;top:21px" width="9" height="5"><path d="M0.7 4.3 L4.5 0.8 L8.3 4.3" stroke="#aaa" stroke-width="1.2" fill="none"/></svg>
  <div class="t tl" style="left:129px;top:39px">Видео</div>
  <svg style="left:325px;top:14px" width="21" height="20" viewBox="0 0 21 20"><circle cx="6.5" cy="4.5" r="3.6" stroke="#fff" stroke-width="1.5" fill="none"/><path d="M1 18.5 V14.5 A4.5 4.5 0 0 1 5.5 10 H7.5 A4.5 4.5 0 0 1 12 14.5 V18.5 Z" stroke="#fff" stroke-width="1.5" fill="none"/><circle cx="15" cy="6.5" r="2.8" stroke="#fff" stroke-width="1.5" fill="none"/><path d="M13.5 11.5 H16 A4 4 0 0 1 20 15.5 V18.5 H12" stroke="#fff" stroke-width="1.5" fill="none"/></svg>
  <div class="t" style="left:351px;top:15px;font-size:12px;color:#c8c8c8">163</div>
  <svg style="left:384px;top:21px" width="9" height="5"><path d="M0.7 4.3 L4.5 0.8 L8.3 4.3" stroke="#aaa" stroke-width="1.2" fill="none"/></svg>
  <div class="t tl" style="left:306px;top:39px">Участники</div>
  <svg style="left:432px;top:13px" width="24" height="23" viewBox="0 0 24 23"><path d="M7 4.5 V3.5 A2.8 2.8 0 0 1 9.8 0.8 H20 A2.8 2.8 0 0 1 22.8 3.5 V10 A2.8 2.8 0 0 1 20 12.8 H18.5" stroke="#fff" stroke-width="1.4" fill="none"/><path d="M3.8 5 H14.5 A3 3 0 0 1 17.5 8 V14.5 A3 3 0 0 1 14.5 17.5 H9 L5.5 21.5 V17.5 H3.8 A3 3 0 0 1 0.8 14.5 V8 A3 3 0 0 1 3.8 5 Z" stroke="#fff" stroke-width="1.4" fill="none"/><circle cx="5.3" cy="11.2" r="1.1" fill="#fff"/><circle cx="9.2" cy="11.2" r="1.1" fill="#fff"/><circle cx="13.1" cy="11.2" r="1.1" fill="#fff"/></svg>
  <svg style="left:474px;top:21px" width="9" height="5"><path d="M0.7 4.3 L4.5 0.8 L8.3 4.3" stroke="#aaa" stroke-width="1.2" fill="none"/></svg>
  <div class="t tl" style="left:434px;top:39px">Чат</div>
  <svg style="left:526px;top:13px" width="26" height="22" viewBox="0 0 26 22"><path d="M13 20.5 C6 15.5 1 11.5 1 6.8 C1 3.5 3.5 1 6.8 1 C9.5 1 11.7 2.6 13 4.8 C14.3 2.6 16.5 1 19.2 1 C22.5 1 25 3.5 25 6.8 C25 11.5 20 15.5 13 20.5 Z" stroke="#fff" stroke-width="1.5" fill="none"/></svg>
  <div class="t tl" style="left:498px;top:39px">Отреагировать</div>
  <div class="a" style="left:626px;top:13px;width:24px;height:20px;border-radius:3px;background:#1dce74"></div>
  <svg style="left:632px;top:17px" width="12" height="12"><path d="M6 1 L11 6.5 H7.8 V11 H4.2 V6.5 H1 Z" fill="#000"/></svg>
  <div class="t tl" style="left:605px;top:39px">Поделиться</div>
  <svg style="left:719px;top:13px" width="24" height="22" viewBox="0 0 24 22"><path d="M1 8 V5 A4 4 0 0 1 5 1 H9 M15 21 H19 A4 4 0 0 0 23 17 V14" stroke="#fff" stroke-width="1.5" fill="none"/><circle cx="18" cy="6" r="4.2" stroke="#fff" stroke-width="1.5" fill="none"/><circle cx="6" cy="16" r="4.2" stroke="#fff" stroke-width="1.5" fill="none"/></svg>
  <div class="t tl" style="left:695px;top:39px">Приложения</div>
  <svg style="left:814px;top:10px" width="27" height="27" viewBox="0 0 27 27"><circle cx="13.5" cy="13.5" r="12.3" stroke="#fff" stroke-width="1.5" fill="none"/><circle cx="8" cy="13.5" r="1.5" fill="#fff"/><circle cx="13.5" cy="13.5" r="1.5" fill="#fff"/><circle cx="19" cy="13.5" r="1.5" fill="#fff"/></svg>
  <div class="t tl" style="left:784px;top:39px">Дополнительно</div>
  <svg style="left:985px;top:10px" width="26" height="26" viewBox="0 0 26 26"><path d="M14 3 L24 0.8 V25 L14 23" stroke="#e0245e" stroke-width="1.6" fill="none"/><path d="M16 2 V23.5" stroke="#e0245e" stroke-width="1.6"/><circle cx="10" cy="4" r="2.3" stroke="#fff" stroke-width="1.3" fill="none"/><path d="M7 8 L11 8 L13 13 L15.5 14 M9 8 L6.5 14 L4 15.5 M8.5 14 L7 19 L4.5 24 M8.5 14 L12 18 L13 24 M8 9 L5 11 L3 14" stroke="#fff" stroke-width="1.3" fill="none" stroke-linecap="round"/></svg>
  <div class="t tl" style="left:980px;top:39px">Выйти</div>
</div>

<!-- CHAT PANEL -->
<div id="chat" class="a" style="left:1046px;top:43px;width:320px;height:684px;background:#fff;overflow:hidden">
  <!-- messages (coords relative to panel: x-1046, y-43) -->
  <div class="a bub" style="left:44px;top:-30px;width:219px;height:129.6px"></div>
  <div class="a" style="left:131px;top:45px;width:1.5px;height:3px;background:#555"></div><div class="a" style="left:173px;top:45px;width:1.5px;height:3px;background:#555"></div>
  <div class="t msg" style="left:54px;top:52px">Спокійного дня і плідної</div>
  <div class="t msg" style="left:54px;top:72px">насиченої праці</div>
  <svg style="left:51px;top:109px" width="15" height="13" viewBox="0 0 15 13"><path d="M7.5 12.6 C3 9 0.3 6.8 0.3 3.9 C0.3 1.8 2 0.3 4 0.3 C5.5 0.3 6.8 1.1 7.5 2.3 C8.2 1.1 9.5 0.3 11 0.3 C13 0.3 14.7 1.8 14.7 3.9 C14.7 6.8 12 9 7.5 12.6 Z" fill="#e5121f"/></svg><div class="t rc" style="left:70px;top:110px">5</div>

  <div class="t nmc" style="left:51px;top:140px">Зоряна Коновська <span class="tm">10:10</span></div>
  <div class="a av" style="left:13px;top:156px;background:#7c4fa6">З</div>
  <div class="a bub" style="left:44px;top:155px;width:219px;height:78px"></div>
  <div class="t msg" style="left:54px;top:164px">Доброго усім дня! Привіт зі</div>
  <div class="t msg" style="left:54px;top:184px">Львова! Вас вітає Наукова</div>
  <div class="t msg" style="left:54px;top:204px">бібліотека ЛНУ ім. І. Франка!</div>
  <svg style="left:51px;top:242px" width="15" height="13" viewBox="0 0 15 13"><path d="M7.5 12.6 C3 9 0.3 6.8 0.3 3.9 C0.3 1.8 2 0.3 4 0.3 C5.5 0.3 6.8 1.1 7.5 2.3 C8.2 1.1 9.5 0.3 11 0.3 C13 0.3 14.7 1.8 14.7 3.9 C14.7 6.8 12 9 7.5 12.6 Z" fill="#e5121f"/></svg><div class="t rc" style="left:70px;top:243px">5</div>

  <div class="t nmc" style="left:51px;top:273px">Марія Чегринець <span class="tm">10:13</span></div>
  <div class="a" style="left:13px;top:290px;width:24px;height:24px;border-radius:7px;overflow:hidden;background:#f0ede8">
    <div class="a" style="left:-2px;top:-2px;width:28px;height:28px;filter:blur(0.8px)">
    <div class="a" style="left:5px;top:3px;width:18px;height:24px;border-radius:9px 9px 4px 4px;background:#f2e8c8"></div>
    <div class="a" style="left:9px;top:8px;width:11px;height:14px;border-radius:5px;background:#e4b29c"></div>
    <div class="a" style="left:7px;top:23px;width:16px;height:5px;background:#e8d8c8"></div>
    </div>
  </div>
  <div class="a bub" style="left:44px;top:288px;width:219px;height:78px"></div>
  <div class="t msg" style="left:54px;top:297px">Щиро дякуємо Вам, пані</div>
  <div class="t msg" style="left:54px;top:317px">Людмило, за такі щирі</div>
  <div class="t msg" style="left:54px;top:337px">побажання!</div>
  <svg style="left:51px;top:375px" width="15" height="13" viewBox="0 0 15 13"><path d="M7.5 12.6 C3 9 0.3 6.8 0.3 3.9 C0.3 1.8 2 0.3 4 0.3 C5.5 0.3 6.8 1.1 7.5 2.3 C8.2 1.1 9.5 0.3 11 0.3 C13 0.3 14.7 1.8 14.7 3.9 C14.7 6.8 12 9 7.5 12.6 Z" fill="#e5121f"/></svg><div class="t rc" style="left:70px;top:376px">3</div>

  <div class="t nmc" style="left:51px;top:406px">Алла Гончаренко <span class="tm">10:15</span></div>
  <div class="a av" style="left:13px;top:422px;background:#d0600f">А</div>
  <div class="a bub" style="left:44px;top:421px;width:219px;height:77px"></div>
  <div class="t msg" style="left:54px;top:430px">Вітаю учасників</div>
  <div class="t msg" style="left:54px;top:450px">конференції! Гарного всім</div>
  <div class="t msg" style="left:54px;top:470px">дня!</div>
  <svg style="left:51px;top:506px" width="17" height="16" viewBox="0 0 17 16"><path d="M10 4 H2.5 Q1 4 1 5.5 V10.5 Q1 12 2.5 12 H4 V14.5 L6.8 12 H11.5 Q13 12 13 10.5 V8" stroke="#7a7a8a" stroke-width="1.1" fill="none"/><path d="M13.5 0.5 V6.5 M10.5 3.5 H16.5" stroke="#7a7a8a" stroke-width="1.1"/></svg>
  <svg style="left:75px;top:506px" width="17" height="16" viewBox="0 0 17 16"><path d="M11 3.5 A6 6 0 1 0 13 8" stroke="#7a7a8a" stroke-width="1.1" fill="none"/><circle cx="5" cy="7.5" r="0.9" fill="#7a7a8a"/><circle cx="9" cy="7.5" r="0.9" fill="#7a7a8a"/><path d="M4 10 Q7 13 10 10" stroke="#7a7a8a" stroke-width="1.1" fill="none"/><path d="M13.5 0.5 V6.5 M10.5 3.5 H16.5" stroke="#7a7a8a" stroke-width="1.1"/></svg>
  <svg style="left:109px;top:508px" width="15" height="13" viewBox="0 0 15 13"><path d="M7.5 12.6 C3 9 0.3 6.8 0.3 3.9 C0.3 1.8 2 0.3 4 0.3 C5.5 0.3 6.8 1.1 7.5 2.3 C8.2 1.1 9.5 0.3 11 0.3 C13 0.3 14.7 1.8 14.7 3.9 C14.7 6.8 12 9 7.5 12.6 Z" fill="#e5121f"/></svg><div class="t rc" style="left:128px;top:509px">2</div>

  <!-- scrollbar -->
  <div class="a" style="left:311px;top:44px;width:9px;height:483px;background:#f7f7f7"></div>
  <div class="a" style="left:312px;top:480px;width:7px;height:47px;border-radius:4px;background:#a2a2a2"></div>

  <!-- notice -->
  <div class="a" style="left:0;top:527px;width:320px;height:30px;background:#f4f4f8"></div>
  <svg style="left:29px;top:537px" width="14" height="15" viewBox="0 0 14 15"><circle cx="5" cy="3.5" r="2.8" stroke="#6e6e7e" stroke-width="1" fill="none"/><path d="M0.6 12 Q0.6 7.5 5 7.5 Q6.5 7.5 7.3 8" stroke="#6e6e7e" stroke-width="1" fill="none"/><path d="M0.6 12 H6" stroke="#6e6e7e"/><path d="M10 7 L13.5 8.3 V11 Q13.5 13.5 10 14.6 Q6.5 13.5 6.5 11 V8.3 Z" fill="#1a6fe0"/></svg>
  <div class="t nt" style="left:46px;top:529px">Кто может видеть ваши сообщения? Запись</div>
  <div class="t nt" style="left:46px;top:544px">включена</div>

  <!-- input -->
  <div class="a" style="left:0;top:557px;width:320px;height:127px;background:#fff;border-top:1px solid #ececf0"></div>
  <div class="t" style="left:13px;top:577px;font-size:12px;color:#333">Кому:</div>
  <div class="a" style="left:54px;top:572px;width:185px;height:22.5px;border-radius:5px;background:#0e72ed"></div>
  <div class="t" style="left:61px;top:577px;font-size:12.1px;color:#fff">Групповой чат конференции</div>
  <svg style="left:223px;top:581px" width="9" height="6"><path d="M1 1 L4.5 4.5 L8 1" stroke="#fff" stroke-width="1.5" fill="none"/></svg>
  <div class="t" style="left:17px;top:604px;font-size:15px;color:#7a7a85">Сообщение Короленківські читання. Бі...</div>
  <svg style="left:17px;top:658px" width="15" height="15" viewBox="0 0 15 15"><path d="M0.6 1 H8 M4.3 1 V9" stroke="#666" stroke-width="1.1" fill="none"/><path d="M6 13.5 L6.5 11 L12.5 5 A1.2 1.2 0 0 1 14.2 6.7 L8.2 12.7 Z" stroke="#666" stroke-width="1.1" fill="none"/></svg>
  <svg style="left:49px;top:658px" width="15" height="15"><circle cx="7.5" cy="7.5" r="6.8" stroke="#666" stroke-width="1.1" fill="none"/><circle cx="5.2" cy="6" r="0.9" fill="#666"/><circle cx="9.8" cy="6" r="0.9" fill="#666"/><path d="M4.5 9 Q7.5 12 10.5 9" stroke="#666" stroke-width="1.1" fill="none"/></svg>
  <svg style="left:83px;top:657px" width="13" height="16"><path d="M0.6 2.5 Q0.6 0.6 2.5 0.6 H8 L12.4 5 V13.5 Q12.4 15.4 10.5 15.4 H2.5 Q0.6 15.4 0.6 13.5 Z" stroke="#666" stroke-width="1.1" fill="none"/></svg>
  <svg style="left:114px;top:658px" width="16" height="16"><path d="M13 6 V3 Q13 0.6 10.5 0.6 H3 Q0.6 0.6 0.6 3 V10.5 Q0.6 13 3 13 H7" stroke="#666" stroke-width="1.1" fill="none"/><path d="M12 9 V15.5 M8.8 12.2 H15.2" stroke="#666" stroke-width="1.1"/></svg>
  <svg style="left:142px;top:663px" width="8" height="5"><path d="M0.6 0.6 L4 4 L7.4 0.6" stroke="#666" stroke-width="1.1" fill="none"/></svg>
  <div class="a" style="left:285px;top:653px;width:23px;height:23px;border-radius:5px;background:#ececf0"></div>
  <svg style="left:290px;top:660px" width="13" height="12"><path d="M0.6 1.2 L12.2 1.2 L5.5 10.2 L6.4 3.8 Z" fill="#7a7a7e" stroke="#7a7a7e" stroke-width="0.8" stroke-linejoin="round"/></svg>

  <!-- header -->
  <div class="a" style="left:0;top:0;width:320px;height:1px;background:#202020"></div>
  <div class="a" style="left:0;top:1px;width:320px;height:44px;background:#eff0f4">
    <div class="t" style="left:14px;top:16px;font-size:13.2px;font-weight:bold;color:#232333">Короленківські читання. Бібліотеки...</div>
    <svg style="left:269px;top:16px" width="15" height="14"><path d="M6 1.5 H2.5 Q0.8 1.5 0.8 3.2 V11.5 Q0.8 13.2 2.5 13.2 H10.8 Q12.5 13.2 12.5 11.5 V8" stroke="#555" stroke-width="1.4" fill="none"/><path d="M8.5 0.8 H13.5 V5.8 M13.3 1 L6.5 7.8" stroke="#555" stroke-width="1.4" fill="none"/></svg>
    <svg style="left:297px;top:17px" width="11" height="11"><path d="M0.7 0.7 L10.3 10.3 M10.3 0.7 L0.7 10.3" stroke="#555" stroke-width="1.3"/></svg>
  </div>
</div>

<!-- TASKBAR -->
<div id="taskbar" class="a" style="left:0;top:727px;width:1366px;height:41px;background:linear-gradient(90deg,#e6e6e5 0%,#e4e4e4 46%,#e5e3e6 51%,#ecdfe5 55%,#edddE4 80%,#ebdae1 100%)">
  <svg style="left:15px;top:12px" width="18" height="17"><path d="M0 0.5 H8 V8 H0 Z M9 0.5 H17 V8 H9 Z M0 9 H8 V16.5 H0 Z M9 9 H17 V16.5 H9 Z" fill="#111"/></svg>
  <!-- calculator -->
  <div class="a" style="left:66px;top:9px;width:18px;height:24px;border-radius:2px;background:#5e6c78"></div>
  <div class="a" style="left:68px;top:11px;width:14px;height:4px;background:#6ec8e8"></div>
  <div class="a" style="left:68px;top:17px;width:14px;height:14px;background:repeating-linear-gradient(90deg,#cfd8de 0 3px,transparent 3px 5px),#5e6c78;"></div>
  <div class="a" style="left:68px;top:20px;width:14px;height:1px;background:#5e6c78"></div>
  <div class="a" style="left:68px;top:24px;width:14px;height:1px;background:#5e6c78"></div>
  <div class="a" style="left:68px;top:28px;width:14px;height:1px;background:#5e6c78"></div>
  <div class="a" style="left:78px;top:25px;width:4px;height:6px;background:#1c3f7a"></div>
  <div class="a" style="left:55px;top:38px;width:40px;height:3px;background:#2b6fc9"></div>
  <!-- edge -->
  <svg style="left:112px;top:9px" width="25" height="25" viewBox="0 0 25 25"><defs><linearGradient id="eg" x1="0" y1="0" x2="1" y2="0.6"><stop offset="0" stop-color="#27a8e6"/><stop offset="0.55" stop-color="#35c3c0"/><stop offset="1" stop-color="#5edb5c"/></linearGradient><linearGradient id="eg2" x1="0" y1="0" x2="0.4" y2="1"><stop offset="0" stop-color="#1d8ee0"/><stop offset="1" stop-color="#0f58b0"/></linearGradient></defs><circle cx="12" cy="12" r="11.8" fill="url(#eg)"/><path d="M0.3 11.5 A11.8 11.8 0 0 0 21 19.5 Q15 22 11 18.5 Q7.5 14.5 10.5 10 Q6 7 0.3 11.5 Z" fill="url(#eg2)"/><path d="M8 13.5 Q8 9 11.5 8.5 Q14 8.5 13.8 11.5 Q14 14.8 18.5 15 Q21 15.2 22.5 14 Q20 17.5 15.5 17.5 Q10 17 8 13.5 Z" fill="#eefaf8"/></svg>
  <!-- folder -->
  <div class="a" style="left:162px;top:11px;width:22px;height:19px;border-radius:1px;background:#f2c94c"></div>
  <div class="a" style="left:162px;top:11px;width:9px;height:3px;background:#d9a62a"></div>
  <div class="a" style="left:162px;top:15px;width:22px;height:15px;background:#f7d56a"></div>
  <div class="a" style="left:168px;top:22px;width:10px;height:8px;background:#3f8fd8;border-radius:1px"></div>
  <div class="a" style="left:171px;top:26px;width:4px;height:4px;background:#f7d56a"></div>
  <div class="a" style="left:153px;top:38px;width:40px;height:3px;background:#2b6fc9"></div>
  <!-- opera -->
  <div class="a" style="left:210px;top:9px;width:23px;height:24px;border-radius:50%;border:5px solid #d81a2a;background:transparent"></div>
  <div class="a" style="left:216px;top:11px;width:11px;height:20px;border-radius:50%;border:2px solid #b8101c"></div>
  <!-- notepad -->
  <svg style="left:258px;top:8px" width="25" height="25" viewBox="0 0 25 25"><path d="M8 2 L22 4 L17 23 L2 21 Z" fill="#a8d8e8"/><path d="M8 2 L22 4 L21 8 L7 6 Z" fill="#7ab8d0"/><path d="M17 23 L22 4 L24 5 L19 23 Z" fill="#e8e8e8"/><path d="M4 18 L17 20" stroke="#fff" stroke-width="1"/></svg>
  <div class="a" style="left:251px;top:38px;width:40px;height:3px;background:#2b6fc9"></div>
  <!-- chrome -->
  <svg style="left:308px;top:8px" width="27" height="27" viewBox="0 0 27 27"><circle cx="12" cy="12" r="11.5" fill="#db4437"/><path d="M12 12 L2 17.8 A11.5 11.5 0 0 0 18 22 Z" fill="#0f9d58"/><path d="M12 12 L23.5 12 A11.5 11.5 0 0 1 18 22 Z" fill="#f4b400"/><path d="M12 0.5 A11.5 11.5 0 0 1 23.5 12 L12 12 Z" fill="#db4437"/><path d="M2 17.8 A11.5 11.5 0 0 1 12 0.5 L12 12 Z" fill="#db4437"/><circle cx="12" cy="12" r="5.2" fill="#fff"/><circle cx="12" cy="12" r="4.2" fill="#4285f4"/><circle cx="19.5" cy="19.5" r="7" fill="#e8632b"/><text x="19.5" y="23" font-family="Liberation Sans" font-size="9" fill="#fff" text-anchor="middle">и</text></svg>
  <div class="a" style="left:300px;top:38px;width:40px;height:3px;background:#2b6fc9"></div>
  <!-- word -->
  <div class="a" style="left:363px;top:9px;width:18px;height:22px;border-radius:2px;background:linear-gradient(180deg,#41a5ee 0%,#2b7cd3 40%,#185abd 70%,#103f91 100%)"></div>
  <div class="a" style="left:357px;top:14px;width:13px;height:13px;border-radius:1px;background:#185abd"></div>
  <div class="t" style="left:358px;top:16px;font-size:10px;font-weight:bold;color:#fff">W</div>
  <div class="a" style="left:349px;top:38px;width:40px;height:3px;background:linear-gradient(90deg,#2b6fc9 80%,#8ab4e0 80%)"></div>
  <!-- acrobat -->
  <div class="a" style="left:407px;top:9px;width:22px;height:22px;border-radius:2px;background:#c4161c"></div>
  <svg style="left:410px;top:12px" width="16" height="16"><path d="M3 13 Q5 9 7 5 Q8 2 7.5 1.5 Q6.5 1.5 7 5 Q8 9 13 11 Q14.5 11.5 13 12 Q9 11 3 13 Z" stroke="#fff" stroke-width="1.2" fill="none"/></svg>
  <div class="a" style="left:398px;top:38px;width:40px;height:3px;background:#2b6fc9"></div>
  <!-- zoom -->
  <div class="a" style="left:455px;top:8px;width:24px;height:24px;border-radius:50%;background:#0b5cff"></div>
  <div class="t" style="left:458px;top:14px;font-size:11px;font-weight:bold;color:#fff;letter-spacing:-0.5px">zm</div>
  <div class="a" style="left:447px;top:38px;width:40px;height:3px;background:linear-gradient(90deg,#2b6fc9 80%,#8ab4e0 80%)"></div>
  <!-- paint -->
  <svg style="left:503px;top:8px" width="26" height="26" viewBox="0 0 26 26"><path d="M12 4 C5 4 1 9 1 14 C1 19 5 22 9 22 C11 22 11 20 10 19 C9 17 11 16 13 17 C18 18 22 16 22 12 C22 7 18 4 12 4 Z" fill="#d8e4ee" stroke="#8aa0b8" stroke-width="0.8"/><circle cx="6" cy="13" r="2" fill="#e05050"/><circle cx="9" cy="8.5" r="2" fill="#f0c040"/><circle cx="14" cy="8" r="2" fill="#50b050"/><circle cx="17.5" cy="11.5" r="1.8" fill="#4080e0"/><path d="M24 1 L13 19" stroke="#c8842a" stroke-width="2.5"/><path d="M13.5 18 L11 23" stroke="#e8a860" stroke-width="2.5"/></svg>
  <!-- tray -->
  <svg style="left:1097px;top:17px" width="13" height="8"><path d="M0.7 7.3 L6.5 1 L12.3 7.3" stroke="#111" stroke-width="1.3" fill="none"/></svg>
  <svg style="left:1120px;top:13px" width="12" height="17"><rect x="3" y="0" width="6" height="11" rx="3" fill="#111"/><path d="M1 8 Q1 13 6 13 Q11 13 11 8 M6 13 V16 M3 16.5 H9" stroke="#111" stroke-width="1.1" fill="none"/></svg>
  <svg style="left:1144px;top:17px" width="15" height="9"><rect x="0.6" y="0.6" width="12.4" height="7.8" stroke="#111" stroke-width="1.1" fill="none"/><rect x="2.2" y="2.2" width="4.5" height="4.6" fill="#111"/><rect x="13.3" y="3" width="1.5" height="3" fill="#111"/></svg>
  <svg style="left:1170px;top:13px" width="15" height="15"><path d="M1 14 A13 13 0 0 1 14 1 M3.8 14 A10.2 10.2 0 0 1 14 3.8 M6.6 14 A7.4 7.4 0 0 1 14 6.6 M9.4 14 A4.6 4.6 0 0 1 14 9.4" stroke="#222" stroke-width="0.9" fill="none"/><circle cx="12.5" cy="12.5" r="1.6" fill="#111"/></svg>
  <svg style="left:1190px;top:13px" width="18" height="16"><path d="M0.7 5 H3.5 L8 1 V15 L3.5 11 H0.7 Z" stroke="#111" stroke-width="1.1" fill="none"/><path d="M10.5 5 Q12 8 10.5 11 M12.8 3 Q15.5 8 12.8 13 M15 1 Q19 8 15 15" stroke="#111" stroke-width="1.1" fill="none"/></svg>
  <div class="t" style="left:1218px;top:15px;font-size:11.5px;color:#111">УКР</div>
  <div class="t" style="left:1266px;top:6px;font-size:11.2px;color:#111">10:17</div>
  <div class="t" style="left:1253px;top:23px;font-size:11.1px;color:#111">22.10.2025</div>
  <svg style="left:1324px;top:12px" width="18" height="17"><path d="M0.7 0.7 H16.5 V12.5 H10.5 L8.6 15.5 L6.7 12.5 H0.7 Z" stroke="#111" stroke-width="1.2" fill="none"/></svg>
  <div class="a" style="left:1360px;top:0;width:1px;height:41px;background:#c8bcc2"></div>
</div>

</body></html>
